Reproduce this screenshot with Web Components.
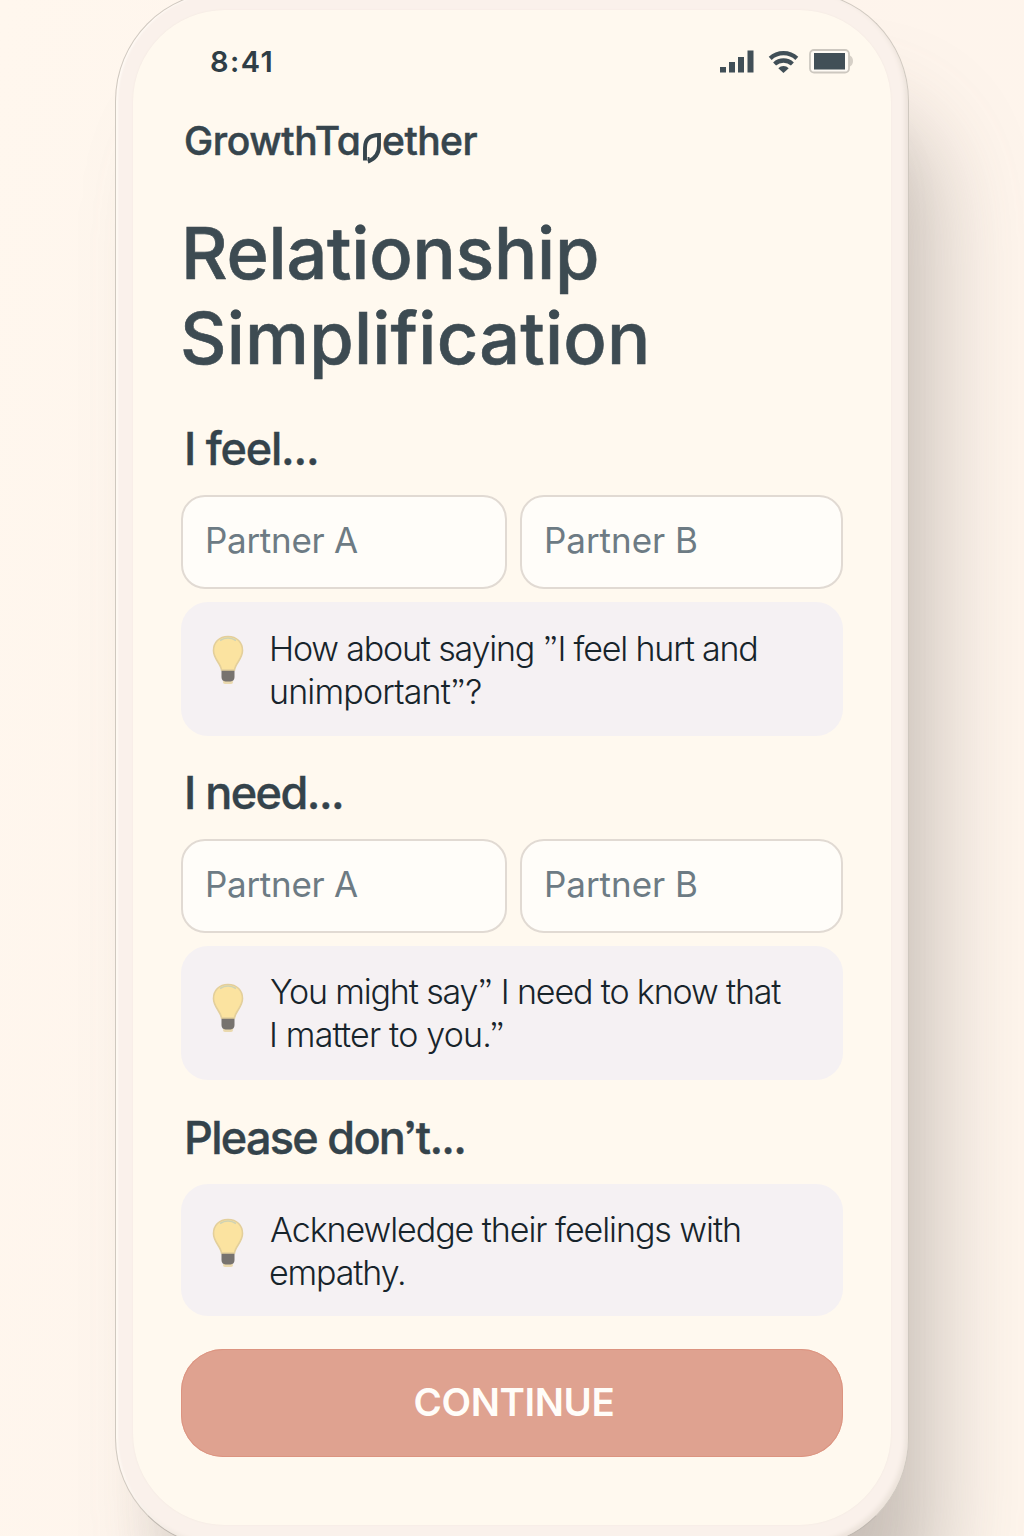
<!DOCTYPE html>
<html lang="en">
<head>
<meta charset="utf-8">
<title>GrowthTogether</title>
<style>
html,body{margin:0;padding:0}
body{width:1024px;height:1536px;overflow:hidden;background:linear-gradient(100deg,#fff7ee 0%,#fef4ec 50%,#fef5ec 100%);font-family:Inter,"Liberation Sans",sans-serif;color:#36454d}
</style>
</head>
<body>
<phone-frame>
  <status-bar></status-bar>
  <brand-logo></brand-logo>
  <page-title></page-title>
  <prompt-section heading="I feel..." heading-width="130" style="--h:83px;--tip:134px">
    <field-pair slot="fields"></field-pair>
    <tip-card slot="tip" style="--pad:25px"><fit-line ink="482" style="margin-left:1px">How about saying ”I feel hurt and</fit-line><fit-line ink="208">unimportant”?</fit-line></tip-card>
  </prompt-section>
  <prompt-section heading="I need..." heading-width="155" style="--h:103px;--tip:134px">
    <field-pair slot="fields"></field-pair>
    <tip-card slot="tip" style="--bulb:37px"><fit-line ink="509" style="margin-left:-1px">You might say” I need to know that</fit-line><fit-line ink="230" style="margin-left:1px">I matter to you.”</fit-line></tip-card>
  </prompt-section>
  <prompt-section heading="Please don’t..." heading-width="276" style="--h:104px;--tip:132px">
    <tip-card slot="tip" style="--bulb:34px"><fit-line ink="470" style="margin-left:-1px">Acknewledge their feelings with</fit-line><fit-line ink="134" style="margin-left:-1px">empathy.</fit-line></tip-card>
  </prompt-section>
  <continue-button></continue-button>
</phone-frame>
<script>
const define = (name, html, init) => customElements.define(name, class extends HTMLElement {
  constructor() {
    super();
    this.attachShadow({mode: 'open'}).innerHTML = html;
  }
  connectedCallback() { if (init) init.call(this, this.shadowRoot); }
});

define('phone-frame', `<style>
:host{display:block;box-sizing:border-box;width:794px;height:1557px;margin:-9px 0 0 115px;padding:18px 17px 24px 17px;border:1px solid #cfc8bf;border-bottom-color:#bdb6ae;border-radius:110px;background:#faf1eb;box-shadow:inset -3px -3px 4px #ece3db,inset 2px 0 2px #fffaf5,46px 104px 92px -18px rgba(112,104,98,.35),14px 90px 40px -14px rgba(105,98,92,.04)}
.screen{box-sizing:border-box;height:1515px;border-radius:92px;background:#fff9ef;padding:0 48px;display:flex;flex-direction:column;box-shadow:0 0 2px #f1e7df}
</style><div class="screen"><slot></slot></div>`);

define('status-bar', `<style>
:host{display:flex;justify-content:space-between;align-items:center;height:104px;padding:0 0 0 30px;margin-right:-11px;box-sizing:border-box;color:#2f3e46}
fit-line{font-size:29px;font-weight:600;line-height:104px}
svg{display:block}
</style><fit-line ink="60.500">8:41</fit-line>
<svg width="136" height="30" viewBox="718 47 136 30" fill="#414f57">
<rect x="720" y="67" width="6" height="5.5"/><rect x="729" y="62" width="6" height="10.5"/><rect x="738" y="57" width="6" height="15.5"/><rect x="747.5" y="50.5" width="6" height="22"/>
<path d="M783.5 73l-5.200-4.800a7.500 7.500 0 0 1 10.400 0z"/>
<g fill="none" stroke="#414f57" stroke-width="4.300"><path d="M770.200 58.400a19.500 19.500 0 0 1 26.600 0"/><path d="M774.600 64a13 13 0 0 1 17.800 0"/></g>
<path d="M849 55q4 1.500 4 6t-4 6z" fill="#d6d0c7"/>
<rect x="810" y="50" width="39" height="22.500" rx="4" fill="#fffbf5" stroke="#cdc8c0" stroke-width="1.800"/>
<rect x="814" y="53" width="31" height="16.500"/></svg>`);

define('brand-logo', `<style>
:host{display:flex;height:55px;padding-left:5px;font-size:39px;font-weight:500;line-height:54px;font-feature-settings:"cv11";color:#36454d;-webkit-text-stroke:.5px #36454d}
fit-line:first-of-type{width:172px}
svg{display:block;flex:none;margin:16px 0 0 3px}
</style><fit-line ink="171">GrowthTa</fit-line>
<svg width="22" height="36" viewBox="361 131 22 36" fill="none" stroke="#36454d" stroke-width="3.900"><path d="M365 161.500V149q0-13 14-13v10.500q0 12-11 16"/><path d="M369.500 164q-1.200-2-1-6" stroke-width="2"/></svg>
<fit-line ink="94.500">ether</fit-line>`);

define('page-title', `<style>
:host{display:block;height:243px;box-sizing:border-box;padding:41px 0 0 5px;font-size:72px;font-weight:500;line-height:85px;color:#3d4b52}
fit-line{-webkit-text-stroke:.6px #3d4b52}
fit-line:last-child{margin-left:-3px}
</style><fit-line ink="411">Relationship</fit-line><fit-line ink="463">Simplification</fit-line>`);

define('prompt-section', `<style>
:host{display:block}
.head{height:var(--h);box-sizing:border-box;padding:0 0 16px 6px;display:flex;align-items:flex-end;font-size:45px;font-weight:500;line-height:60px;color:#34434b;-webkit-text-stroke:.4px #34434b;font-feature-settings:"ss03"}
::slotted(tip-card){height:var(--tip)}
</style><div class="head"><fit-line></fit-line></div><slot name="fields"></slot><slot name="tip"></slot>`);

define('field-pair', `<style>
:host{display:grid;grid-template-columns:326px 323px;gap:13px;height:94px;margin-bottom:13px}
div{box-sizing:border-box;border:2px solid #e1dad3;border-radius:24px;background:#fffdf9;padding-left:25px;font-size:35px;line-height:86px;color:#6d7b84}
</style><div><fit-line ink="150">Partner A</fit-line></div><div><fit-line ink="149">Partner B</fit-line></div>`);

define('tip-card', `<style>
:host{display:flex;box-sizing:border-box;background:#f5f1f3;border-radius:27px;padding-left:31px;font-size:34px;font-weight:300;line-height:43px;color:#17242b;font-feature-settings:"ss03"}
svg{flex:none;margin-top:var(--bulb,33px)}
.text{padding:var(--pad,24px) 0 0 27px}
</style><svg width="32" height="51" viewBox="0 0 32 51">
<rect x="11" y="45" width="10" height="4" rx="2" fill="#ead9ae"/>
<path d="M9.500 34h13v8q0 4-4 4.500h-5q-4-.5-4-4.500z" fill="#77736f"/>
<path d="M16 1.500C7 1.500 1.500 7.500 1.500 15.500 1.500 24 8.500 28 9.500 35h13C23.500 28 30.500 24 30.500 15.500 30.500 7.500 25 1.500 16 1.500z" fill="#fbe3a0" stroke="#e3cf9b" stroke-width="1.600"/>
<path d="M8 5.500q8-5 16 0" fill="none" stroke="#cfd3b4" stroke-width="1.600"/></svg>
<div class="text"><slot></slot></div>`);

define('continue-button', `<style>
:host{display:flex;justify-content:center;height:108px;margin-top:33px;flex:none;box-sizing:border-box;padding-left:5px;border-radius:42px;background:#dfa290;box-shadow:inset 0 0 0 1px #dc9480;font-size:38.500px;font-weight:600;line-height:107px;color:#fffdf9}
</style><fit-line ink="199">CONTINUE</fit-line>`);

/* Headings take their text and width from attributes of the section. */
document.querySelectorAll('prompt-section').forEach(s => {
  const line = s.shadowRoot.querySelector('fit-line');
  line.textContent = s.getAttribute('heading');
  line.setAttribute('ink', s.getAttribute('heading-width'));
});

/* One line of text whose tracking is set so that its ink spans the given width.
   Registered last, so the surrounding styles are in place when it measures. */
define('fit-line', `<style>:host{display:block;white-space:pre}span{display:inline-block}</style><span><slot></slot></span>`, function (root) {
  const text = this.textContent, cs = getComputedStyle(this);
  const ctx = document.createElement('canvas').getContext('2d');
  ctx.font = `${cs.fontWeight} ${cs.fontSize} ${cs.fontFamily}`;
  const m = ctx.measureText(text);
  const ink = m.actualBoundingBoxLeft + m.actualBoundingBoxRight;
  const s = root.querySelector('span');
  s.style.letterSpacing = ((+this.getAttribute('ink') - ink) / (text.length - 1)).toFixed(3) + 'px';
  s.style.marginLeft = m.actualBoundingBoxLeft.toFixed(2) + 'px';
});
</script>
</body>
</html>
